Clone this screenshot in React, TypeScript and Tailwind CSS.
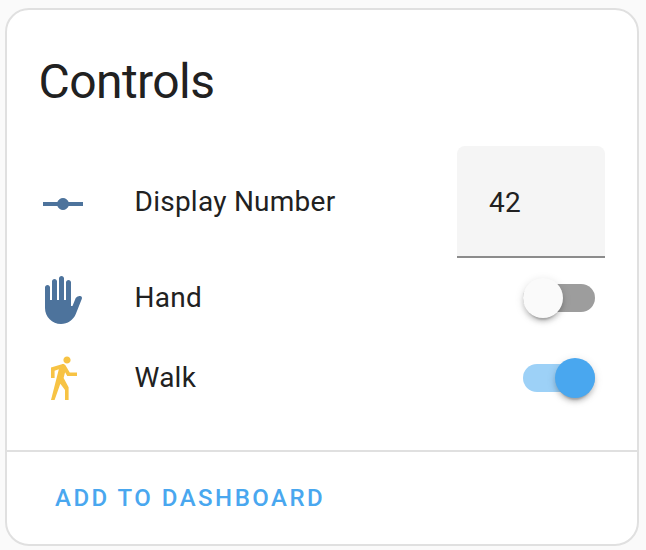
import { useState } from "react";
import type { ReactNode } from "react";

const RAY_VERTEX =
  "M22,11H14.82C14.4,9.84 13.3,9 12,9C10.7,9 9.6,9.84 9.18,11H2V13H9.18C9.6,14.16 10.7,15 12,15C13.3,15 14.4,14.16 14.82,13H22V11Z";
const HAND =
  "M3 16V5.75C3 5.06 3.56 4.5 4.25 4.5S5.5 5.06 5.5 5.75V12H6.5V2.75C6.5 2.06 7.06 1.5 7.75 1.5C8.44 1.5 9 2.06 9 2.75V12H10V1.25C10 .56 10.56 0 11.25 0S12.5 .56 12.5 1.25V12H13.5V3.25C13.5 2.56 14.06 2 14.75 2S16 2.56 16 3.25V15H16.75L18.16 11.47C18.38 10.92 18.84 10.5 19.4 10.31L20.19 10.05C21 9.79 21.74 10.58 21.43 11.37L18.4 19C17.19 22 14.26 24 11 24C6.58 24 3 20.42 3 16Z";
const WALK =
  "M14.12,10H19V8.2H15.38L13.38,4.87C13.08,4.37 12.54,4.03 11.92,4.03C11.74,4.03 11.58,4.06 11.42,4.11L6,5.8V11H7.8V7.33L9.91,6.67L6,22H7.8L10.67,13.89L13,17V22H14.8V15.59L12.31,11.05L13.04,8.18M14,3.8C15,3.8 15.8,3 15.8,2C15.8,1 15,0.2 14,0.2C13,0.2 12.2,1 12.2,2C12.2,3 13,3.8 14,3.8Z";

function Row({ icon, color, label, tall, children }: {
  icon: string;
  color: string;
  label: string;
  tall?: boolean;
  children: ReactNode;
}) {
  return (
    <div className={`flex items-center ${tall ? "h-28" : "h-20"}`}>
      <svg viewBox="0 0 24 24" className={`mt-1 size-12 shrink-0 fill-current ${color}`} aria-hidden="true">
        <path d={icon} />
      </svg>
      <span className="ml-[47.5px] flex-1 text-[28px] leading-10 tracking-[0.25px]">{label}</span>
      {children}
    </div>
  );
}

function Toggle({ label, initial }: { label: string; initial: boolean }) {
  const [on, setOn] = useState(initial);
  return (
    <button
      role="switch"
      aria-checked={on}
      aria-label={label}
      onClick={() => setOn(!on)}
      className={`mr-2.5 flex h-7 w-[72px] items-center rounded-full ${on ? "justify-end bg-[#9dd1f7]" : "justify-start bg-[#9d9d9d]"}`}
    >
      <span
        className={`size-10 shrink-0 rounded-full shadow-[0_6px_2px_-4px_rgba(0,0,0,0.2),0_4px_4px_0_rgba(0,0,0,0.14),0_2px_10px_0_rgba(0,0,0,0.12)] ${on ? "bg-[#49a7ef]" : "bg-[#fafafa]"}`}
      />
    </button>
  );
}

export default function App() {
  return (
    <main className="h-[550px] w-[646px] bg-[#fafafa] pt-2 pl-[5px] font-[Roboto,sans-serif] text-[#212121] antialiased">
      <section className="flex h-[538px] w-[634px] flex-col rounded-3xl border-2 border-[#e0e0e0] bg-white">
        <h1 className="mt-6 mb-4 px-[31.5px] text-[48px] leading-[96px] font-normal tracking-[-0.012em]">Controls</h1>
        <div className="flex-1 px-8">
          <Row icon={RAY_VERTEX} color="text-[#4d739c]" label="Display Number" tall>
            <input
              aria-label="Display Number"
              defaultValue="42"
              className="h-28 w-[148px] rounded-t-lg border-b-2 border-[#8c8c8c] bg-[#f5f5f5] px-8 pt-0.5 text-[28px] tracking-[0.25px] outline-none"
            />
          </Row>
          <Row icon={HAND} color="text-[#4d739c]" label="Hand">
            <Toggle label="Hand" initial={false} />
          </Row>
          <Row icon={WALK} color="text-[#f7c344]" label="Walk">
            <Toggle label="Walk" initial />
          </Row>
        </div>
        <footer className="flex h-[94px] items-center border-t-2 border-[#e0e0e0] pl-12">
          <button className="text-2xl font-medium tracking-[2.48px] text-[#49a7ef]">ADD TO DASHBOARD</button>
        </footer>
      </section>
    </main>
  );
}
